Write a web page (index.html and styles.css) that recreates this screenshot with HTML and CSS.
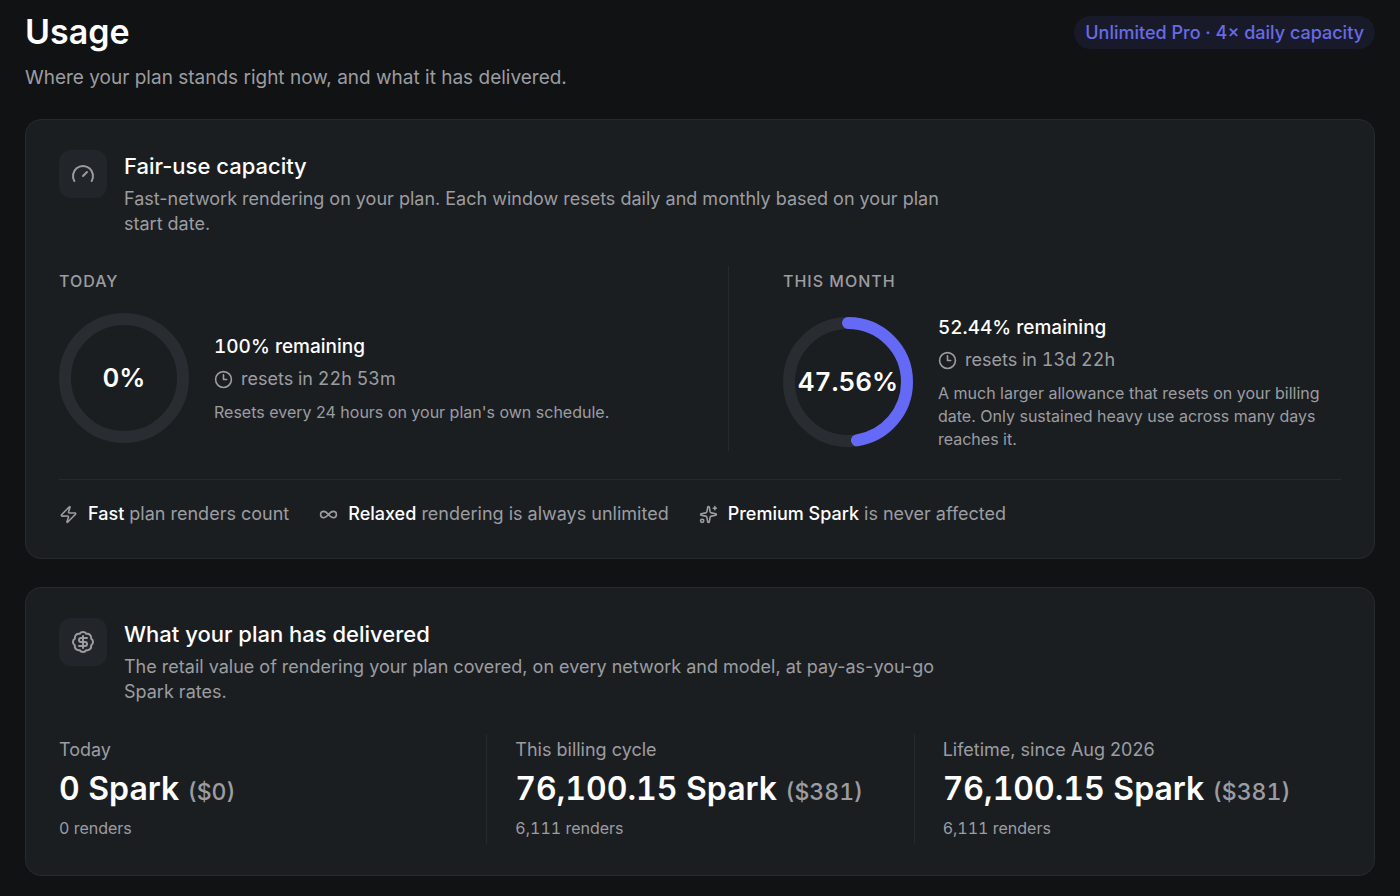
FILE: index.html
```html
<!DOCTYPE html>
<html lang="en">
<head>
    <meta charset="UTF-8">
    <meta name="viewport" content="width=device-width, initial-scale=1.0">
    <title>Usage</title>
    <link rel="stylesheet" href="styles.css">
</head>
<body>
    <header class="page-header">
        <div>
            <h1>Usage</h1>
            <p class="subtitle">Where your plan stands right now, and what it has delivered.</p>
        </div>
        <span class="plan-badge">Unlimited Pro · 4× daily capacity</span>
    </header>

    <main>
        <section class="card">
            <div class="card-header">
                <div class="icon-box">
                    <svg class="icon icon-large" viewBox="0 0 24 24"><path d="m12 14 4-4"/><path d="M3.34 19a10 10 0 1 1 17.32 0"/></svg>
                </div>
                <div class="card-heading">
                    <h2>Fair-use capacity</h2>
                    <p>Fast-network rendering on your plan. Each window resets daily and monthly based on your plan start date.</p>
                </div>
            </div>

            <div class="windows">
                <div class="window">
                    <h3>Today</h3>
                    <div class="window-body">
                        <div class="ring">
                            <svg viewBox="0 0 130 130">
                                <circle class="ring-track" cx="65" cy="65" r="59"/>
                            </svg>
                            <span class="ring-value">0%</span>
                        </div>
                        <div class="window-info">
                            <p class="remaining">100% remaining</p>
                            <p class="resets">
                                <svg class="icon" viewBox="0 0 24 24"><circle cx="12" cy="12" r="10"/><path d="M12 6v6h4"/></svg>
                                resets in 22h 53m
                            </p>
                            <p class="note">Resets every 24 hours on your plan's own schedule.</p>
                        </div>
                    </div>
                </div>
                <div class="window">
                    <h3>This month</h3>
                    <div class="window-body">
                        <div class="ring">
                            <svg viewBox="0 0 130 130">
                                <circle class="ring-track" cx="65" cy="65" r="59"/>
                                <circle class="ring-fill" cx="65" cy="65" r="59" pathLength="100" stroke-dasharray="47.56 100" transform="rotate(-90 65 65)"/>
                            </svg>
                            <span class="ring-value">47.56%</span>
                        </div>
                        <div class="window-info">
                            <p class="remaining">52.44% remaining</p>
                            <p class="resets">
                                <svg class="icon" viewBox="0 0 24 24"><circle cx="12" cy="12" r="10"/><path d="M12 6v6h4"/></svg>
                                resets in 13d 22h
                            </p>
                            <p class="note">A much larger allowance that resets on your billing date. Only sustained heavy use across many days reaches it.</p>
                        </div>
                    </div>
                </div>
            </div>

            <ul class="rules">
                <li>
                    <svg class="icon" viewBox="0 0 24 24"><path d="M4 14a1 1 0 0 1-.78-1.63l9.9-10.2a.5.5 0 0 1 .86.46l-1.92 6.02A1 1 0 0 0 13 10h7a1 1 0 0 1 .78 1.63l-9.9 10.2a.5.5 0 0 1-.86-.46l1.92-6.02A1 1 0 0 0 11 14z"/></svg>
                    <span><strong>Fast</strong> plan renders count</span>
                </li>
                <li>
                    <svg class="icon" viewBox="0 0 24 24"><path d="M6 16c5 0 7-8 12-8a4 4 0 0 1 0 8c-5 0-7-8-12-8a4 4 0 1 0 0 8"/></svg>
                    <span><strong>Relaxed</strong> rendering is always unlimited</span>
                </li>
                <li>
                    <svg class="icon" viewBox="0 0 24 24"><path d="M11.017 2.814a1 1 0 0 1 1.966 0l1.051 5.558a2 2 0 0 0 1.594 1.594l5.558 1.051a1 1 0 0 1 0 1.966l-5.558 1.051a2 2 0 0 0-1.594 1.594l-1.051 5.558a1 1 0 0 1-1.966 0l-1.051-5.558a2 2 0 0 0-1.594-1.594l-5.558-1.051a1 1 0 0 1 0-1.966l5.558-1.051a2 2 0 0 0 1.594-1.594z"/><path d="M20 2v4"/><path d="M22 4h-4"/><circle cx="4" cy="20" r="2"/></svg>
                    <span><strong>Premium Spark</strong> is never affected</span>
                </li>
            </ul>
        </section>

        <section class="card">
            <div class="card-header">
                <div class="icon-box">
                    <svg class="icon icon-large" viewBox="0 0 24 24"><path d="M3.85 8.62a4 4 0 0 1 4.78-4.77 4 4 0 0 1 6.74 0 4 4 0 0 1 4.78 4.78 4 4 0 0 1 0 6.74 4 4 0 0 1-4.77 4.78 4 4 0 0 1-6.75 0 4 4 0 0 1-4.78-4.77 4 4 0 0 1 0-6.76Z"/><path d="M16 8h-6a2 2 0 1 0 0 4h4a2 2 0 1 1 0 4H8"/><path d="M12 18V6"/></svg>
                </div>
                <div class="card-heading">
                    <h2>What your plan has delivered</h2>
                    <p>The retail value of rendering your plan covered, on every network and model, at pay-as-you-go Spark rates.</p>
                </div>
            </div>

            <div class="stats">
                <div class="stat">
                    <h3>Today</h3>
                    <p class="stat-value">0 Spark <span>($0)</span></p>
                    <p class="stat-renders">0 renders</p>
                </div>
                <div class="stat">
                    <h3>This billing cycle</h3>
                    <p class="stat-value">76,100.15 Spark <span>($381)</span></p>
                    <p class="stat-renders">6,111 renders</p>
                </div>
                <div class="stat">
                    <h3>Lifetime, since Aug 2026</h3>
                    <p class="stat-value">76,100.15 Spark <span>($381)</span></p>
                    <p class="stat-renders">6,111 renders</p>
                </div>
            </div>
        </section>
    </main>
</body>
</html>
```

FILE: styles.css
```css
* {
    box-sizing: border-box;
}

body {
    font-family: Inter, "Liberation Sans", sans-serif;
    font-size: 18px;
    line-height: 26px;
    background-color: #111214;
    color: #9b9da1;
    margin: 0;
    padding: 8px 25px 19px;
}

h1, h2, h3, p, ul {
    margin: 0;
    padding: 0;
}

.page-header {
    display: flex;
    justify-content: space-between;
    align-items: flex-start;
    margin-bottom: 28px;
}

h1 {
    color: #fff;
    font-size: 34px;
    font-weight: 600;
    line-height: 48px;
}

.subtitle {
    font-size: 19px;
    line-height: 27px;
    margin-top: 8px;
}

.plan-badge {
    background-color: #181a2a;
    color: #686be6;
    font-weight: 500;
    line-height: 33px;
    margin-top: 8px;
    padding: 0 11px;
    border-radius: 17px;
}

.card {
    background-color: #1b1e21;
    border: 1px solid #27292c;
    border-radius: 16px;
    padding: 30px 33px 31px;
    margin-bottom: 28px;
}

.card:last-child {
    margin-bottom: 0;
}

.card-header {
    display: flex;
    gap: 17px;
    margin-bottom: 30px;
}

.icon-box {
    display: flex;
    align-items: center;
    justify-content: center;
    flex: none;
    width: 48px;
    height: 48px;
    background-color: #22252a;
    border-radius: 12px;
}

.card-heading {
    max-width: 830px;
}

h2 {
    color: #fff;
    font-size: 22px;
    font-weight: 500;
    line-height: 32px;
    margin-bottom: 4px;
}

.card-heading p {
    line-height: 25px;
}

.icon {
    flex: none;
    width: 19px;
    height: 19px;
    fill: none;
    stroke: #9b9da1;
    stroke-width: 2;
    stroke-linecap: round;
    stroke-linejoin: round;
}

.icon-large {
    width: 24px;
    height: 24px;
}

/* Daily and monthly windows */
.windows {
    display: grid;
    grid-template-columns: 1fr 1fr;
    gap: 56px;
}

.window + .window {
    border-left: 1px solid #27292c;
    padding-left: 54px;
}

.window h3 {
    font-size: 16px;
    font-weight: 500;
    line-height: 30px;
    letter-spacing: 1px;
    text-transform: uppercase;
    margin-bottom: 17px;
}

.window-body {
    display: flex;
    align-items: center;
    gap: 25px;
}

.ring {
    display: grid;
    place-items: center;
    flex: none;
    width: 130px;
    height: 130px;
}

.ring svg, .ring-value {
    grid-area: 1 / 1;
}

.ring circle {
    fill: none;
    stroke-width: 12;
}

.ring .ring-track {
    stroke: #292c30;
}

.ring .ring-fill {
    stroke: #6469f6;
    stroke-linecap: round;
}

.ring-value {
    color: #fff;
    font-size: 26px;
    font-weight: 600;
    font-variant-numeric: tabular-nums;
}

.remaining {
    color: #fff;
    font-size: 19px;
    font-weight: 500;
    line-height: 29px;
    font-variant-numeric: tabular-nums;
}

.resets {
    display: flex;
    align-items: center;
    gap: 8px;
    margin-top: 5px;
    font-variant-numeric: tabular-nums;
}

.note {
    font-size: 16px;
    line-height: 23px;
    margin-top: 9px;
}

.rules {
    display: flex;
    flex-wrap: wrap;
    gap: 12px 30px;
    list-style: none;
    border-top: 1px solid #27292c;
    margin-top: 28px;
    padding-top: 21px;
}

.rules li {
    display: flex;
    align-items: center;
    gap: 10px;
}

.rules strong {
    color: #fff;
    font-weight: 500;
}

/* Delivered value */
.stats {
    display: grid;
    grid-template-columns: repeat(3, 1fr);
}

.stat {
    padding-bottom: 3px;
}

.stat + .stat {
    border-left: 1px solid #27292c;
    padding-left: 28px;
}

.stat h3 {
    font-size: 18px;
    font-weight: 400;
    line-height: 32px;
}

.stat-value {
    color: #fff;
    font-size: 32px;
    font-weight: 600;
    line-height: 46px;
    font-variant-numeric: tabular-nums;
}

.stat-value span {
    color: #9b9da1;
    font-size: 23px;
    font-weight: 500;
}

.stat-renders {
    font-size: 16px;
    line-height: 26px;
    font-variant-numeric: tabular-nums;
}
```
